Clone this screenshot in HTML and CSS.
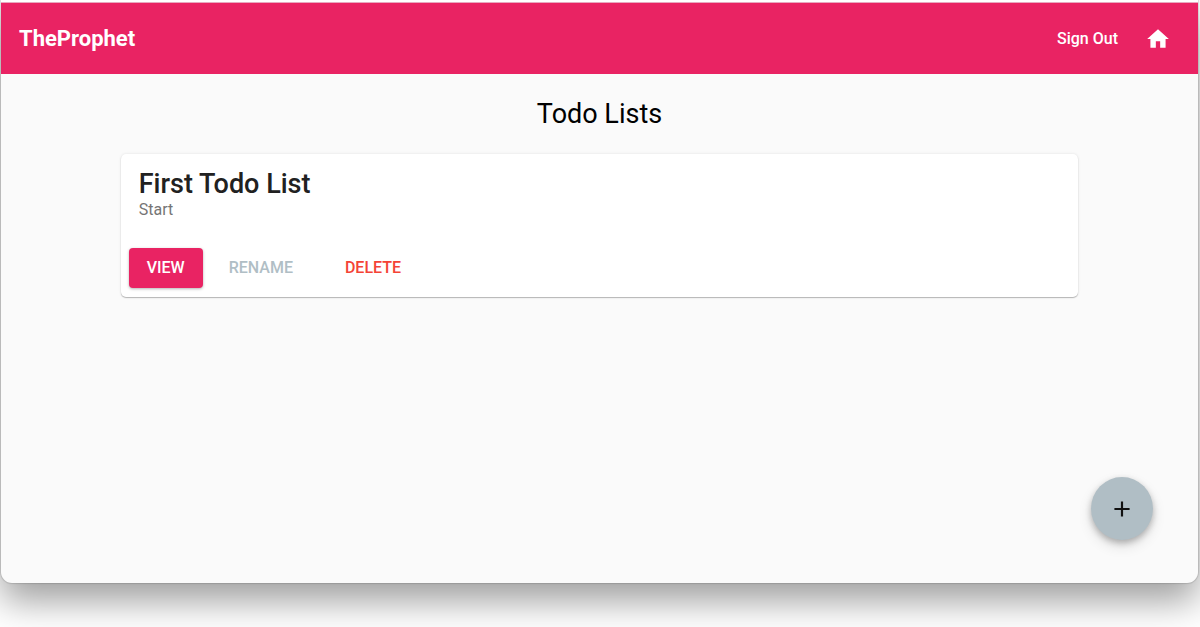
FILE: index.html
```html
<!DOCTYPE html>
<html lang="en">
<head>
<meta charset="utf-8">
<meta name="viewport" content="width=device-width, initial-scale=1">
<title>TheProphet</title>
<link rel="stylesheet" href="styles.css">
</head>
<body>
<div class="window">
  <header class="app-bar">
    <a class="brand" href="#">TheProphet</a>
    <nav class="nav">
      <button class="sign-out" type="button">Sign Out</button>
      <a class="home" href="#" aria-label="Home">
        <svg class="icon" viewBox="0 0 24 24" aria-hidden="true"><path d="M10 20v-6h4v6h5v-8h3L12 3 2 12h3v8z"/></svg>
      </a>
    </nav>
  </header>
  <main class="content">
    <h1 class="page-title">Todo Lists</h1>
    <article class="card">
      <div class="card-body">
        <h2 class="card-title">First Todo List</h2>
        <p class="card-text">Start</p>
      </div>
      <div class="card-actions">
        <button class="btn btn-view" type="button">VIEW</button>
        <button class="btn btn-rename" type="button">RENAME</button>
        <button class="btn btn-delete" type="button">DELETE</button>
      </div>
    </article>
  </main>
  <button class="fab" type="button" aria-label="Add list">
    <svg class="icon" viewBox="0 0 24 24" aria-hidden="true"><path d="M19 13h-6v6h-2v-6H5v-2h6V5h2v6h6z"/></svg>
  </button>
</div>
</body>
</html>
```
FILE: styles.css
```css
* {
  box-sizing: border-box;
}

body {
  display: flex;
  min-height: 100vh;
  margin: 0;
  padding: 0 2px 44px 1px;
  background: #fff;
  color: #000;
  font-family: Roboto, "Liberation Sans", sans-serif;
  overflow: hidden;
}

button {
  border: 0;
  font-family: inherit;
  cursor: pointer;
}

.window {
  position: relative;
  display: flex;
  flex: 1;
  flex-direction: column;
  border-top: 2px solid #fff;
  border-radius: 0 0 11px 11px;
  background: #fafafa;
  box-shadow: 0 0 1px 1px rgba(0, 0, 0, 0.12), 0 18px 36px rgba(0, 0, 0, 0.38);
}

.app-bar {
  display: flex;
  align-items: center;
  justify-content: space-between;
  height: 72px;
  padding: 0 27px 0 18px;
  border-top: 1px solid #e8a9bf;
  background: #e92363;
  color: #fff;
}

.brand {
  color: inherit;
  font-size: 22px;
  font-weight: 700;
  line-height: 32px;
  text-decoration: none;
}

.nav {
  display: flex;
  align-items: center;
  gap: 27px;
}

.sign-out {
  padding: 0;
  background: none;
  color: inherit;
  font-size: 16px;
  font-weight: 500;
}

.icon {
  display: block;
  width: 26px;
  height: 26px;
  fill: currentColor;
}

.home {
  color: inherit;
}

.content {
  padding: 24px 10%;
}

.page-title {
  margin: 0 0 24px;
  font-size: 27px;
  font-weight: 400;
  line-height: 32px;
  text-align: center;
}

.card {
  border-radius: 5px;
  background: #fff;
  box-shadow: 0 1px 1px rgba(0, 0, 0, 0.25), 0 0 3px rgba(0, 0, 0, 0.1);
}

.card-body {
  padding: 14px 18px 20px;
}

.card-title {
  margin: 0;
  color: #212121;
  font-size: 27px;
  font-weight: 500;
  line-height: 32px;
}

.card-text {
  margin: 0;
  color: #757575;
  font-size: 16px;
  line-height: 20px;
}

.card-actions {
  display: flex;
  gap: 8px;
  padding: 8px 8px 9px;
}

.btn {
  height: 40px;
  padding: 0 18px 2px;
  border-radius: 4px;
  background: none;
  font-size: 16px;
  font-weight: 500;
}

.btn-view {
  background: #e92363;
  box-shadow: 0 1px 3px rgba(0, 0, 0, 0.3);
  color: #fff;
}

.btn-rename {
  color: #b0bec5;
}

.btn-delete {
  margin-left: 8px;
  color: #f44336;
}

.fab {
  position: absolute;
  right: 45px;
  bottom: 43px;
  display: flex;
  align-items: center;
  justify-content: center;
  width: 62px;
  height: 63px;
  padding: 0;
  border-radius: 50%;
  background: #b0bec5;
  box-shadow: 0 3px 6px rgba(0, 0, 0, 0.24), 0 6px 14px rgba(0, 0, 0, 0.12);
  color: #111;
}
```
